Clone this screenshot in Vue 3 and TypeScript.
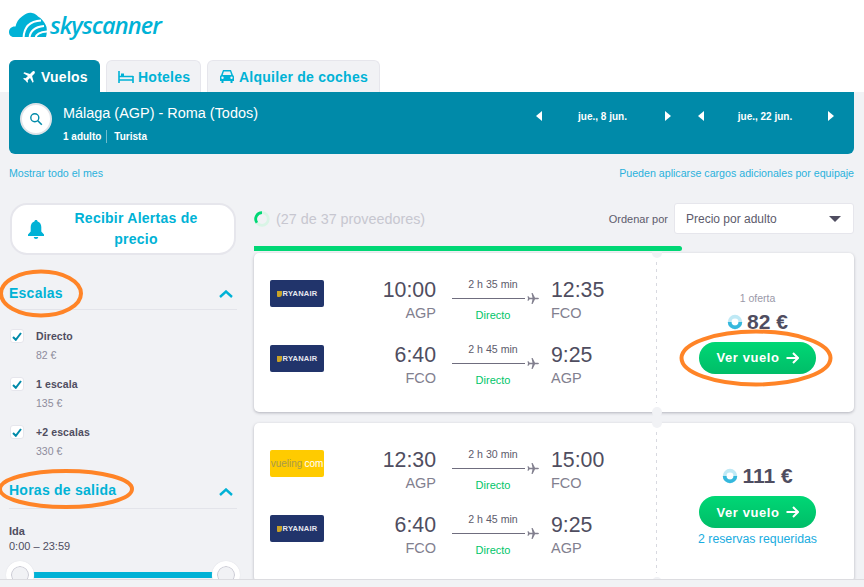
<script setup lang="ts">
interface Leg { from: string; dep: string; dur: string; arr: string; to: string; air: 'ryanair' | 'vueling' }
interface Offer { legs: Leg[]; offers?: string; price: string; note?: string }
const offers: Offer[] = [
  { offers: '1 oferta', price: '82 €', legs: [
    { air: 'ryanair', dep: '10:00', from: 'AGP', dur: '2 h 35 min', arr: '12:35', to: 'FCO' },
    { air: 'ryanair', dep: '6:40', from: 'FCO', dur: '2 h 45 min', arr: '9:25', to: 'AGP' },
  ] },
  { price: '111 €', note: '2 reservas requeridas', legs: [
    { air: 'vueling', dep: '12:30', from: 'AGP', dur: '2 h 30 min', arr: '15:00', to: 'FCO' },
    { air: 'ryanair', dep: '6:40', from: 'FCO', dur: '2 h 45 min', arr: '9:25', to: 'AGP' },
  ] },
]
const stops = [
  { label: 'Directo', price: '82 €' },
  { label: '1 escala', price: '135 €' },
  { label: '+2 escalas', price: '330 €' },
]
const dates = ['jue., 8 jun.', 'jue., 22 jun.']
</script>

<template>
  <div class="page">
    <header class="top">
      <div class="logo">
        <svg width="38" height="26" viewBox="0 0 38 26">
          <path d="M5 25 C1.500 25 0 22.500 0 20 C0 16.500 3 14 6.500 14.500 C7.500 10 9.500 7 13 4.500 C16.500 1.500 20 0 23 1 C26 1.500 28 3 29 4.500 C32 6 36 10 37.500 15 C38 18 38 22 37 25 Z" fill="#00b2d6"/>
          <g fill="none" stroke="#fff" stroke-width="2">
            <path d="M14.500 26 C15 15 21 9 32 8.500"/>
            <path d="M20.500 26 C21 19 25 15 35 14"/>
            <path d="M26.500 26 C27 23 30 20 38 19.500"/>
          </g>
        </svg>
        <span class="logo-text">skyscanner</span>
      </div>
      <nav class="tabs">
        <a class="tab active">
          <svg width="14" height="14" viewBox="0 0 24 24"><path fill="currentColor" d="M21.500 2.500c-1-1-2.800-.8-4 .4L13.700 6.700 4 4 2.300 5.700l7.900 4.600-3.900 3.900-3-.5L2 15l4 3 3 4 1.300-1.300-.5-3 3.900-3.900 4.600 7.900 1.700-1.700-2.700-9.700 3.800-3.800c1.200-1.200 1.400-3 .4-4z"/></svg>
          Vuelos
        </a>
        <a class="tab hotel">
          <svg width="16" height="12" viewBox="0 0 16 12"><path fill="none" stroke="currentColor" stroke-width="1.600" d="M1 0v12M15 5v7M1 9h14M1 5.500h14"/><rect x="3" y="2.500" width="3" height="3" fill="currentColor"/></svg>
          Hoteles
        </a>
        <a class="tab car">
          <svg width="14" height="13" viewBox="0 0 14 13"><path fill="currentColor" d="M3 0h8l2 5.200c.6.300 1 .8 1 1.500V11h-1.500v2h-2v-2h-7v2h-2v-2H0V6.700c0-.7.400-1.200 1-1.500zm.9 1.500L2.700 5h8.600l-1.200-3.500zM2.500 6.500a1.200 1.200 0 100 2.400 1.200 1.200 0 000-2.400zm9 0a1.200 1.200 0 100 2.400 1.200 1.200 0 000-2.400z"/></svg>
          Alquiler de coches
        </a>
      </nav>
    </header>

    <main class="body">
      <section class="search">
        <div class="search-circle">
          <svg width="14" height="14" viewBox="0 0 14 14"><circle cx="5.800" cy="5.800" r="4" fill="none" stroke="#008aa9" stroke-width="1.400"/><path d="M8.800 8.800l4 4" stroke="#008aa9" stroke-width="1.600"/></svg>
        </div>
        <div class="search-text">
          <div class="route">Málaga (AGP) - Roma (Todos)</div>
          <div class="pax"><span class="pax-a">1 adulto</span><span>Turista</span></div>
        </div>
        <div class="dates">
          <div v-for="d in dates" :key="d" class="date">
            <i class="tri left"></i><span>{{ d }}</span><i class="tri right"></i>
          </div>
        </div>
      </section>

      <div class="links">
        <a>Mostrar todo el mes</a>
        <a>Pueden aplicarse cargos adicionales por equipaje</a>
      </div>

      <div class="columns">
        <aside class="side">
          <button class="alert">
            <svg width="16" height="19" viewBox="0 0 16 19"><path fill="#00b2d6" d="M8 0c1 0 1.600.7 1.600 1.500C12 2.300 13.300 4.500 13.300 7v4.500L16 14.500V16H0v-1.500l2.700-3V7c0-2.500 1.300-4.700 3.700-5.500C6.400.7 7 0 8 0zM5.800 17h4.400c0 1.300-1 2-2.200 2s-2.200-.7-2.200-2z"/></svg>
            <span>Recibir Alertas de precio</span>
          </button>

          <div class="head first"><b>Escalas</b><svg width="14" height="8" viewBox="0 0 14 8"><path d="M1 7l6-5.500L13 7" fill="none" stroke="#00b2d6" stroke-width="2.400"/></svg></div>
          <ul class="stops">
            <li v-for="s in stops" :key="s.label">
              <span class="box"><svg width="10" height="9" viewBox="0 0 10 9"><path d="M1 5l2.800 2.800L9 1" fill="none" stroke="#008aa9" stroke-width="2"/></svg></span>
              <div><div class="stop-name">{{ s.label }}</div><div class="stop-price">{{ s.price }}</div></div>
            </li>
          </ul>

          <div class="head second"><b>Horas de salida</b><svg width="14" height="8" viewBox="0 0 14 8"><path d="M1 7l6-5.500L13 7" fill="none" stroke="#00b2d6" stroke-width="2.400"/></svg></div>
          <div class="ida">Ida</div>
          <div class="range">0:00 – 23:59</div>
          <div class="slider"><i class="thumb"></i><i class="track"></i><i class="thumb"></i></div>
        </aside>

        <section class="results">
          <div class="status">
            <svg width="16" height="16" viewBox="0 0 16 16"><circle cx="8" cy="8" r="6.300" fill="none" stroke="#d9f5e6" stroke-width="2.800"/><path d="M8 1.700A6.300 6.300 0 002.900 11.700" fill="none" stroke="#00d775" stroke-width="2.800"/></svg>
            <span class="prov">(27 de 37 proveedores)</span>
            <span class="sort-label">Ordenar por</span>
            <div class="select"><span>Precio por adulto</span><i class="caret"></i></div>
          </div>
          <div class="progress"></div>

          <article v-for="o in offers" :key="o.price" class="card">
            <div class="legs">
              <div v-for="(l, i) in o.legs" :key="i" class="leg">
                <div v-if="l.air === 'ryanair'" class="air ryanair"><i class="harp"></i>RYANAIR</div>
                <div v-else class="air vueling"><span>vueling</span><em>com</em></div>
                <div class="end dep"><div class="time">{{ l.dep }}</div><div class="code">{{ l.from }}</div></div>
                <div class="mid">
                  <div class="dur">{{ l.dur }}</div>
                  <div class="line">
                    <i></i>
                    <svg width="12" height="11" viewBox="0 0 12 11"><path fill="#82808f" d="M12 5.500c0-.5-.8-.8-1.500-.8H8L5.600 0H4.500l1 4.700H2.600L1.500 3.300H.5L1 5.500.5 7.700h1l1.100-1.400h2.900l-1 4.700h1.100L8 6.300h2.500c.7 0 1.500-.3 1.500-.8z"/></svg>
                  </div>
                  <div class="stop">Directo</div>
                </div>
                <div class="end arr"><div class="time">{{ l.arr }}</div><div class="code">{{ l.to }}</div></div>
              </div>
            </div>
            <div class="buy">
              <i class="notch n-top"></i><i class="notch n-bot"></i><i class="dash"></i>
              <div v-if="o.offers" class="num">{{ o.offers }}</div>
              <div class="price">
                <svg width="16" height="16" viewBox="0 0 15 15"><circle cx="7.500" cy="7.500" r="5" fill="none" stroke="#bfe9f5" stroke-width="3.500"/><path d="M2.500 7.500A5 5 0 0012.500 7.500" fill="none" stroke="#35b8dd" stroke-width="3.500"/></svg>
                <span>{{ o.price }}</span>
              </div>
              <button class="cta">Ver vuelo
                <svg width="13" height="12" viewBox="0 0 13 12"><path d="M0.500 6h11M7 1l5 5-5 5" fill="none" stroke="#fff" stroke-width="2"/></svg>
              </button>
              <a v-if="o.note" class="note">{{ o.note }}</a>
            </div>
          </article>
        </section>
      </div>
    </main>

    <footer class="foot"></footer>

    <svg class="marks" width="864" height="587" viewBox="0 0 864 587">
      <g fill="none" stroke="#ff8427" stroke-width="4">
        <ellipse cx="41" cy="293.500" rx="40" ry="22"/>
        <ellipse cx="66" cy="489" rx="66" ry="18"/>
        <ellipse cx="756" cy="358" rx="74.500" ry="26.500"/>
      </g>
    </svg>
  </div>
</template>

<style>
html, body { margin: 0; overflow: hidden; }
</style>

<style scoped>
.page { position: relative; width: 864px; height: 587px; overflow: hidden; background: #f1f2f5; font-family: "Liberation Sans", Arial, sans-serif; color: #4f4d60; }
.top { background: #fff; height: 92px; padding-left: 9px; box-sizing: border-box; display: flex; flex-direction: column; }
.logo { display: flex; align-items: flex-start; gap: 3px; height: 60px; box-sizing: border-box; padding-top: 12px; }
.logo-text { font-family: "Open Sans", sans-serif; font-style: italic; font-weight: 600; font-size: 23.500px; line-height: 26px; color: #00b2d6; letter-spacing: -0.850px; }
.tabs { display: flex; gap: 6px; height: 32px; }
.tab { display: flex; align-items: center; gap: 4px; box-sizing: border-box; height: 32px; padding-left: 11px; font-weight: 700; font-size: 14px; letter-spacing: .25px; color: #00b2d6; background: #f1f2f5; border: 1px solid #e6e6ec; border-bottom: 0; border-radius: 6px 6px 0 0; }
.tab.active { width: 91px; padding-left: 12px; gap: 5px; background: #008aa9; border-color: #008aa9; color: #fff; }
.tab.hotel { width: 95px; }
.tab.car { width: 173px; padding-left: 12px; gap: 5px; }
.body { padding: 0 10px 0 9px; }
.search { display: flex; height: 62px; box-sizing: border-box; background: #008aa9; border-radius: 0 0 6px 6px; color: #fff; padding: 11px 0 0 11px; }
.search-circle { width: 32px; height: 32px; box-sizing: border-box; border-radius: 50%; background: #fff; border: 2px solid #dfe3e8; display: flex; align-items: center; justify-content: center; }
.search-text { margin-left: 11px; }
.route { font-size: 14.450px; line-height: 20px; }
.pax { display: flex; font-size: 10px; font-weight: 700; margin-top: 7px; line-height: 13px; }
.pax-a { padding-right: 5px; margin-right: 7px; border-right: 1px solid #6fbccd; }
.dates { margin-left: auto; display: flex; gap: 27px; padding: 6px 20px 0 0; height: 12px; }
.date { display: flex; align-items: center; justify-content: space-between; width: 136px; font-size: 10px; font-weight: 700; height: 14px; }
.date:first-child { width: 135px; }
.date span { margin-right: 2px; }
.tri { width: 0; height: 0; border-top: 5.500px solid transparent; border-bottom: 5.500px solid transparent; }
.tri.left { border-right: 6px solid #fff; }
.tri.right { border-left: 6px solid #fff; }
.links { display: flex; justify-content: space-between; height: 50px; padding-top: 12px; box-sizing: border-box; font-size: 10.650px; line-height: 14px; color: #2ab1dc; }
.columns { display: flex; gap: 17px; }
.side { width: 228px; flex: none; }
.alert { display: flex; align-items: center; width: 226px; height: 52px; box-sizing: border-box; background: #fff; border: 2px solid #e6e6ec; border-radius: 17px; padding: 0 0 0 16px; font: 700 14px/21px "Liberation Sans", sans-serif; letter-spacing: .25px; color: #00b2d6; margin: -1px 0 0 1px; }
.alert span { flex: 1; text-align: center; padding: 0 18px 0 12px; }
.head { display: flex; justify-content: space-between; align-items: center; height: 34px; border-bottom: 1px solid #e3e4ea; padding-right: 4px; box-sizing: border-box; color: #00b2d6; font-size: 14px; letter-spacing: .25px; }
.head svg { margin-top: 3px; }
.head.first { margin-top: 21px; }
.head.second { height: 35px; padding-bottom: 2px; }
.stops { list-style: none; margin: -1px 0 0; padding: 0 0 0 1px; height: 165px; }
.stops li { display: flex; gap: 12px; height: 48px; padding-top: 21px; box-sizing: border-box; }
.box { width: 14px; height: 14px; box-sizing: border-box; margin-top: -1px; background: #fff; border: 1px solid #e6e6ec; border-radius: 3px; display: flex; align-items: center; justify-content: center; flex: none; }
.stop-name { font-size: 10.500px; font-weight: 700; line-height: 13px; letter-spacing: .1px; }
.stop-price { font-size: 10.500px; color: #8e8c9c; line-height: 13px; margin-top: 6px; }
.ida { font-size: 11px; font-weight: 700; line-height: 14px; margin-top: 15px; }
.range { font-size: 11px; line-height: 14px; margin-top: 1px; }
.slider { display: flex; align-items: center; width: 234px; margin: 8px 0 0 -3px; }
.track { flex: 1; height: 6px; background: #00b2d6; margin: 0 -1px; }
.thumb { position: relative; z-index: 1; box-sizing: border-box; width: 28px; height: 28px; border-radius: 50%; flex: none; background: #f1f2f5; border: 5px solid #fff; box-shadow: inset 0 0 0 1px #c9c9d3, 0 0 1px #d5d5dd; }
.results { width: 600px; flex: none; }
.status { display: flex; align-items: center; height: 31px; margin-top: -1px; }
.prov { margin-left: 6px; font-size: 14.350px; color: #c7c7d0; }
.sort-label { margin-left: auto; font-size: 11px; color: #5d5b6c; }
.select { display: flex; align-items: center; justify-content: space-between; box-sizing: border-box; width: 180px; height: 31px; margin-left: 6px; padding: 0 12px 0 11px; background: #fff; border: 1px solid #e6e6ec; border-radius: 3px; font-size: 12px; color: #5d5b6c; }
.caret { border-top: 6px solid #4f4d60; border-left: 6.500px solid transparent; border-right: 6.500px solid transparent; }
.progress { position: relative; z-index: 1; width: 428px; height: 5px; margin-top: 12px; background: #00d775; border-radius: 0 3px 3px 0; }
.card { display: flex; height: 159px; margin-top: 2px; margin-bottom: 11px; background: #fff; border-radius: 5px; box-shadow: 0 1px 3px rgba(60, 60, 80, .35); }
.card + .card { margin-top: 0; }
.legs { width: 402px; flex: none; padding-top: 19px; box-sizing: border-box; }
.leg { display: flex; height: 65px; padding-left: 16px; }
.air { width: 54px; height: 27px; margin-top: 8px; flex: none; border-radius: 2px; display: flex; align-items: center; justify-content: center; line-height: 27px; }
.ryanair { background: #21346b; color: #e8e9f0; font-size: 7.500px; font-weight: 700; letter-spacing: .25px; }
.harp { width: 5px; height: 6px; background: #c9a227; margin-right: 1px; border-radius: 0 0 3px 1px; }
.vueling { background: #ffcb00; font-size: 10px; }
.vueling span { color: #a89a4a; }
.vueling em { font-style: normal; color: #fff; margin-left: 2px; }
.end { flex: none; }
.dep { width: 112px; text-align: right; }
.arr { margin-left: 11px; }
.time { font-size: 21.300px; line-height: 28px; margin-top: 4px; }
.code { font-size: 14.500px; line-height: 18px; color: #82808f; }
.mid { width: 88px; margin-left: 16px; flex: none; }
.dur { font-size: 10.600px; line-height: 14px; margin-top: 5px; text-align: center; width: 82px; color: #5d5b6c; }
.line { display: flex; align-items: center; height: 11px; margin-top: 2px; }
.line i { width: 73px; height: 1px; background: #6f6d7e; margin-right: 3px; }
.line svg { margin-left: -1px; }
.stop { font-size: 11px; line-height: 14px; margin-top: 4px; width: 82px; text-align: center; color: #00c569; }
.buy { position: relative; flex: 1; display: flex; flex-direction: column; align-items: center; justify-content: center; padding-left: 5px; }
.dash { position: absolute; left: 0; top: 9px; bottom: 9px; width: 1px; background: repeating-linear-gradient(#d8d9e0 0 3px, transparent 3px 7px); }
.notch { position: absolute; left: -4.500px; width: 10px; height: 10px; border-radius: 50%; background: #f1f2f5; }
.n-top { top: -5px; }
.n-bot { bottom: -5px; }
.num { font-size: 10.500px; color: #9a98a8; line-height: 13px; }
.price { display: flex; align-items: center; gap: 4px; font-size: 21px; font-weight: 700; line-height: 26px; margin-top: 4px; }
.cta { display: flex; align-items: center; justify-content: center; gap: 6px; width: 117px; height: 32px; border: 0; border-radius: 16px; background: linear-gradient(#00d775, #00bd68); color: #fff; font: 700 13px "Liberation Sans", sans-serif; letter-spacing: .6px; margin-top: 7px; padding: 0; }
.note { font-size: 12.300px; color: #1aace0; line-height: 14px; margin-top: 4px; }
.foot { position: absolute; left: 0; right: 0; bottom: 0; height: 8px; background: #f1f2f5; border-top: 1px solid #dcdce0; z-index: 2; box-sizing: border-box; }
.marks { position: absolute; left: 0; top: 0; z-index: 3; pointer-events: none; }
</style>
